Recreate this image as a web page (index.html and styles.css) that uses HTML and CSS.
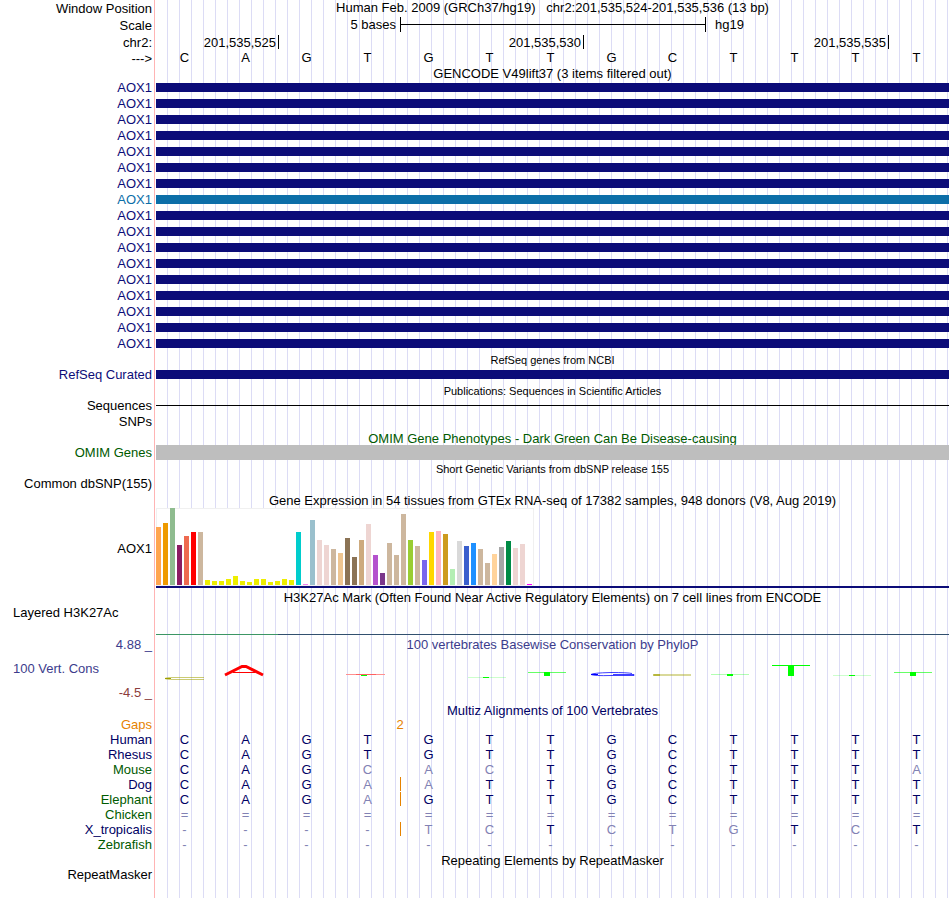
FILE: index.html
```html
<!DOCTYPE html>
<html lang="en">
<head>
    <meta charset="UTF-8">
    <meta name="viewport" content="width=device-width, initial-scale=1.0">
    <title>Human chr2:201,535,524-201,535,536</title>
    <link rel="stylesheet" href="styles.css">
</head>
<body>
    <main class="browser">
        <div class="row tall">
            <span class="label">Window Position</span>
            <h1 class="title position">Human Feb. 2009 (GRCh37/hg19) &nbsp; chr2:201,535,524-201,535,536 (13 bp)</h1>
        </div>
        <div class="row tall">
            <span class="label">Scale</span>
            <div class="bases scale">
                <span class="scale-name">5 bases</span>
                <div class="ruler"></div>
                <span class="assembly">hg19</span>
            </div>
        </div>
        <div class="row">
            <span class="label">chr2:</span>
            <div class="bases">
                <span class="tick two">201,535,525</span>
                <span class="tick five">201,535,530</span>
                <span class="tick five">201,535,535</span>
            </div>
        </div>
        <div class="row">
            <span class="label">---&gt;</span>
            <div class="bases sequence" id="sequence"></div>
        </div>

        <h2 class="title heading first">GENCODE V49lift37 (3 items filtered out)</h2>
        <section id="gencode"></section>

        <h2 class="title heading small">RefSeq genes from NCBI</h2>
        <div class="row short navy">
            <span class="label">RefSeq Curated</span>
            <div class="item"></div>
        </div>

        <h2 class="title heading small">Publications: Sequences in Scientific Articles</h2>
        <div class="row short">
            <span class="label">Sequences</span>
            <div class="item thin"></div>
        </div>
        <div class="row">
            <span class="label">SNPs</span>
        </div>

        <h2 class="title heading low green">OMIM Gene Phenotypes - Dark Green Can Be Disease-causing</h2>
        <div class="row short">
            <span class="label green">OMIM Genes</span>
            <div class="item full"></div>
        </div>

        <h2 class="title heading small">Short Genetic Variants from dbSNP release 155</h2>
        <div class="row short">
            <span class="label">Common dbSNP(155)</span>
        </div>

        <h2 class="title heading tall">Gene Expression in 54 tissues from GTEx RNA-seq of 17382 samples, 948 donors (V8, Aug 2019)</h2>
        <div class="row expression">
            <span class="label">AOX1</span>
            <div class="gene-line">
                <div class="chart" id="chart"></div>
            </div>
        </div>

        <h2 class="title heading low">H3K27Ac Mark (Often Found Near Active Regulatory Elements) on 7 cell lines from ENCODE</h2>
        <div class="row layered">
            <span class="label wide">Layered H3K27Ac</span>
            <div class="bases signal">
                <div class="signal-low"></div>
                <div class="signal-high"></div>
            </div>
        </div>

        <div class="row conservation">
            <div class="axis">
                <span class="label blue">4.88 _</span>
                <span class="label wide blue">100 Vert. Cons</span>
                <span class="label red">-4.5 _</span>
            </div>
            <div>
                <h2 class="title blue">100 vertebrates Basewise Conservation by PhyloP</h2>
                <svg class="logo" viewBox="0 0 793 32" preserveAspectRatio="none" shape-rendering="crispEdges">
                    <g stroke="#a0a000" fill="none" shape-rendering="auto">
                        <path d="M48 24.5H18Q10 24.5 9 25.5Q10 26.5 18 26.5H48" stroke-opacity=".55"/>
                        <path d="M9 25.5H15"/>
                        <path d="M498 22H535" stroke-width="2" stroke-opacity=".4"/>
                        <path d="M497 22H504" stroke-width="2" stroke-opacity=".6"/>
                    </g>
                    <g stroke="#ff0000" shape-rendering="auto">
                        <path d="M69 22L86 13.5H90L107 22" stroke-width="3" fill="none"/>
                        <path d="M77 19.5H99"/>
                    </g>
                    <g stroke="#0000ff" fill="none" shape-rendering="auto">
                        <path d="M476 20.5Q472 19.5 455 19.5Q436 20 435 21.5Q438 23 455 22.5H478V21.5H457" stroke-opacity=".75"/>
                        <path d="M435 21.5H442"/>
                    </g>
                    <rect x="190" y="21" width="39" height="1" fill="#ff9090"/>
                    <rect x="200" y="21" width="20" height="1" fill="#ff6060"/>
                    <g fill="#00ff00">
                        <rect x="205" y="22" width="6" height="1"/>
                        <rect x="312" y="24" width="38" height="1" opacity=".2"/>
                        <rect x="327" y="24" width="6" height="1"/>
                        <rect x="372" y="19" width="38" height="1" opacity=".6"/>
                        <rect x="388" y="19" width="6" height="4"/>
                        <rect x="555" y="21" width="38" height="1" opacity=".3"/>
                        <rect x="571" y="21" width="6" height="2"/>
                        <rect x="616" y="12" width="38" height="1"/>
                        <rect x="632" y="12" width="6" height="11"/>
                        <rect x="677" y="22" width="38" height="1" opacity=".2"/>
                        <rect x="693" y="22" width="6" height="1"/>
                        <rect x="738" y="19" width="38" height="1" opacity=".6"/>
                        <rect x="754" y="19" width="6" height="4"/>
                    </g>
                </svg>
            </div>
        </div>

        <h2 class="title heading short dark">Multiz Alignments of 100 Vertebrates</h2>
        <table class="alignment">
            <colgroup><col class="names"><col span="13"></colgroup>
            <thead>
                <tr class="gaps"><th scope="row">Gaps</th><td colspan="8">2</td><td colspan="5"></td></tr>
            </thead>
            <tbody id="alignment"></tbody>
        </table>

        <h2 class="title heading short">Repeating Elements by RepeatMasker</h2>
        <div class="row short">
            <span class="label">RepeatMasker</span>
        </div>
    </main>

    <script src="script.js"></script>
</body>
</html>
```
FILE: styles.css
```css
* {
    box-sizing: border-box;
}

body {
    margin: 0;
    background-color: #fff;
    color: #000;
    font-family: "Liberation Sans", Arial, Helvetica, sans-serif;
    font-size: 13px;
    line-height: 15px;
}

.browser {
    min-height: 100vh;
    padding-right: 1px;
    background-image:
        linear-gradient(#ffb4b4, #ffb4b4),
        repeating-linear-gradient(to right, transparent 0, transparent 11px, #dcdcf5 11px, #dcdcf5 12px);
    background-position: 154px 0, 156px 0;
    background-size: 1px 100%, 100% 100%;
    background-repeat: no-repeat;
}

.row {
    display: grid;
    grid-template-columns: 154px 1fr;
    column-gap: 2px;
    align-items: center;
    height: 16px;
}

.row.short {
    height: 15px;
}

.row.tall {
    height: 17px;
}

.label {
    padding-right: 2px;
    text-align: right;
    white-space: nowrap;
}

.label.wide {
    padding-left: 13px;
    text-align: left;
}

.title {
    margin: 0;
    font-size: 13px;
    font-weight: normal;
    text-align: center;
    white-space: nowrap;
}

.position {
    align-self: start;
}

.heading {
    height: 16px;
    margin-left: 156px;
    line-height: 18px;
}

.heading.first {
    height: 13px;
    line-height: 15px;
}

.heading.short {
    height: 15px;
    line-height: 17px;
}

.heading.tall {
    height: 17px;
    line-height: 19px;
}

.heading.low {
    line-height: 20px;
}

.heading.small {
    font-size: 11px;
}

.navy {
    color: #0c0c78;
}

.teal {
    color: #0c6ea8;
}

.green {
    color: #005a00;
}

.blue {
    color: #3c3c8c;
}

.red {
    color: #8c3c3c;
}

.dark {
    color: #000064;
}

/* one column per base */
.bases {
    display: grid;
    grid-template-columns: repeat(13, 1fr);
    align-items: center;
}

.bases.scale,
.bases.sequence {
    align-self: start;
}

.sequence span {
    padding-right: 4px;
    text-align: center;
}

.scale-name {
    grid-column: span 4;
    padding-right: 4px;
    text-align: right;
}

.ruler {
    grid-column: span 5;
    height: 15px;
    margin-right: -1px;
    border: solid #000;
    border-width: 0 1px;
    background: linear-gradient(#000, #000) center / 100% 1px no-repeat;
}

.assembly {
    grid-column: span 4;
    padding-left: 10px;
}

.tick {
    height: 14px;
    margin-right: -1px;
    padding-right: 2px;
    border-right: 1px solid #000;
    text-align: right;
}

.tick.two {
    grid-column: span 2;
}

.tick.five {
    grid-column: span 5;
}

.item {
    height: 9px;
    background-color: currentColor;
}

.item.thin {
    height: 1px;
}

.item.full {
    height: 15px;
    background-color: #bebebe;
}

.row.expression {
    height: 80px;
}

.gene-line {
    border-bottom: 2px solid #0c0c78;
}

.chart {
    display: flex;
    align-items: flex-end;
    gap: 2px;
    width: 378px;
    height: 78px;
    padding-bottom: 1px;
    background-color: #fff;
    box-shadow: inset 0 0 0 1px #f0f0f0;
}

.bar {
    width: 5px;
}

.row.layered {
    height: 31px;
    align-items: start;
}

.layered .label {
    padding-top: 1px;
}

.bases.signal {
    align-self: end;
}

.signal-low {
    grid-column: span 2;
    height: 1px;
    background-color: #3c9664;
}

.signal-high {
    grid-column: span 11;
    height: 1px;
    background-color: #32506e;
}

.row.conservation {
    height: 67px;
    align-items: stretch;
    padding: 2px 0;
}

.axis {
    display: flex;
    flex-direction: column;
    justify-content: space-between;
}

.logo {
    display: block;
    width: 100%;
    height: 32px;
    margin-top: 1px;
}

.alignment {
    width: 100%;
    table-layout: fixed;
    border-collapse: collapse;
    color: #000064;
}

.alignment .names {
    width: 156px;
}

.alignment tr {
    height: 15px;
}

.alignment th {
    padding: 0 4px 0 0;
    font-weight: normal;
    text-align: right;
}

.alignment td {
    padding: 0 4px 0 0;
    text-align: center;
}

.alignment .gaps {
    color: #e68200;
}

.alignment .gaps td {
    padding: 0;
}

.alignment .differs {
    color: #8282b4;
}

.alignment .insert {
    background: linear-gradient(#e68200, #e68200) left top / 1px 14px no-repeat;
}
```
FILE: script.js
```js
var sequence = document.getElementById("sequence");
"CAGTGTTGCTTTT".split("").forEach(function (base) {
    var span = document.createElement("span");
    span.textContent = base;
    sequence.appendChild(span);
});

// 17 transcripts, the eighth one is drawn in the lighter colour
var gencode = document.getElementById("gencode");
for (var i = 0; i < 17; i++) {
    var row = document.createElement("div");
    row.className = "row " + (i === 7 ? "teal" : "navy");
    row.innerHTML = '<span class="label">AOX1</span><div class="item"></div>';
    gencode.appendChild(row);
}

// GTEx tissues: bar height, colour
var tissues = [
    [58, "#ffa54f"], [62, "#ee9a00"], [77, "#8fbc8f"], [40, "#8b1c62"], [49, "#ee6a50"], [53, "#ff0000"],
    [53, "#cdb79e"], [5, "#eeee00"], [4, "#eeee00"], [4, "#eeee00"], [6, "#eeee00"], [9, "#eeee00"],
    [4, "#eeee00"], [3, "#eeee00"], [6, "#eeee00"], [6, "#eeee00"], [3, "#eeee00"], [4, "#eeee00"],
    [6, "#eeee00"], [5, "#eeee00"], [53, "#00cdcd"], [1, "#ee82ee"], [65, "#9ac0cd"], [45, "#eed5d2"],
    [40, "#eed5d2"], [36, "#cdb79e"], [32, "#eec591"], [47, "#8b7355"], [28, "#8b7355"], [45, "#cdaa7d"],
    [61, "#eed5d2"], [30, "#b452cd"], [12, "#7a378b"], [42, "#cdb79e"], [30, "#cdb79e"], [71, "#cdb79e"],
    [45, "#9acd32"], [39, "#cdb79e"], [25, "#7a67ee"], [53, "#ffd700"], [54, "#ffb6c1"], [51, "#cd9b1d"],
    [16, "#b4eeb4"], [44, "#d9d9d9"], [39, "#3a5fcd"], [42, "#1e90ff"], [36, "#cdb79e"], [22, "#cdb79e"],
    [31, "#ffd39b"], [38, "#a6a6a6"], [44, "#008b45"], [37, "#eed5d2"], [41, "#eed5d2"], [1, "#ff00ff"]
];
var chart = document.getElementById("chart");
tissues.forEach(function (tissue) {
    var bar = document.createElement("div");
    bar.className = "bar";
    bar.style.height = tissue[0] + "px";
    bar.style.backgroundColor = tissue[1];
    chart.appendChild(bar);
});

// lower case = differs from human
var species = [
    { name: "Human", color: "dark", bases: "CAGTGTTGCTTTT" },
    { name: "Rhesus", color: "dark", bases: "CAGTGTTGCTTTT" },
    { name: "Mouse", color: "green", bases: "CAGcacTGCTTTa" },
    { name: "Dog", color: "dark", bases: "CAGaaTTGCTTTT", insert: 4 },
    { name: "Elephant", color: "green", bases: "CAGaGTTGCTTTT", insert: 4 },
    { name: "Chicken", color: "green", bases: "=============" },
    { name: "X_tropicalis", color: "dark", bases: "----tcTctgTcT", insert: 4 },
    { name: "Zebrafish", color: "green", bases: "-------------" }
];
var alignment = document.getElementById("alignment");
species.forEach(function (s) {
    var tr = document.createElement("tr");
    var html = '<th scope="row" class="' + s.color + '">' + s.name + "</th>";
    s.bases.split("").forEach(function (base, i) {
        var classes = [];
        if (!/[A-Z]/.test(base)) classes.push("differs");
        if (i === s.insert) classes.push("insert");
        html += '<td class="' + classes.join(" ") + '">' + base.toUpperCase() + "</td>";
    });
    tr.innerHTML = html;
    alignment.appendChild(tr);
});
```
